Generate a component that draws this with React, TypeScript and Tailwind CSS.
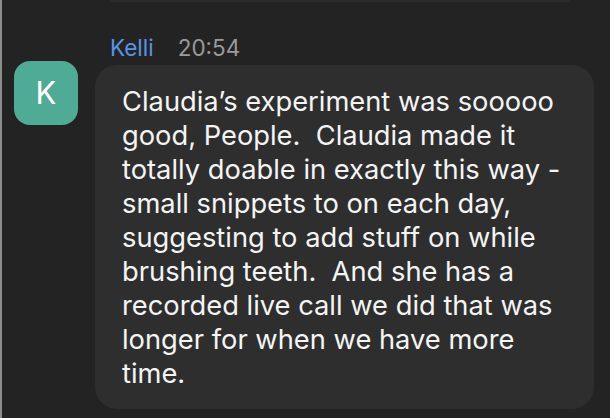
const message = `Claudia’s experiment was sooooo
good, People.  Claudia made it
totally doable in exactly this way -
small snippets to on each day,
suggesting to add stuff on while
brushing teeth.  And she has a
recorded live call we did that was
longer for when we have more
time.`;

function Avatar() {
  return (
    <div className="mt-[61px] flex h-[64px] w-[64px] shrink-0 items-center justify-center rounded-[16px] bg-[#4fab96] text-[31px] text-white">
      K
    </div>
  );
}

export default function App() {
  return (
    <div
      className="flex h-[418px] w-[610px] overflow-hidden bg-[#232323]"
      style={{ fontFamily: "Inter, 'Noto Sans', sans-serif" }}
    >
      <div className="w-[2px] shrink-0 bg-[#8c8c8c]" />
      <div className="relative flex flex-1 gap-[17px] pl-[12px]">
        {/* bottom edge of the previous bubble */}
        <div className="absolute left-[108px] top-0 h-[2px] w-[460px] rounded-b-[2px] bg-[#2c2c2c]" />
        <Avatar />
        <div className="flex w-[499px] flex-col pt-[34px]">
          <div className="flex items-baseline gap-[24px] pl-[15px] leading-[27px]">
            <span className="text-[22.5px] text-[#5a93e6]">Kelli</span>
            <span className="text-[22.5px] text-[#9a9a9a]">20:54</span>
          </div>
          <div className="mt-[4px] rounded-[22px] bg-[#2e2e2e] pb-[18px] pl-[27px] pr-[12px] pt-[20px]">
            <p className="whitespace-pre-wrap text-[27.3px] leading-[34px] text-[#f4f4f4]">{message}</p>
          </div>
        </div>
        <div className="ml-auto w-[1px] shrink-0 bg-[#1d1d1d]" />
      </div>
    </div>
  );
}
